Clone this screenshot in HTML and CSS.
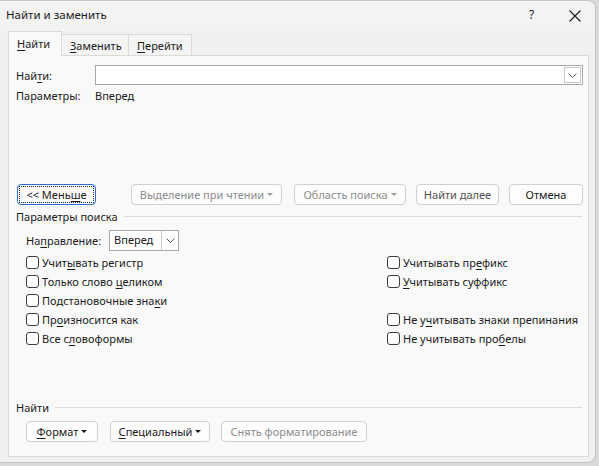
FILE: index.html
```html
<!DOCTYPE html>
<html lang="ru">
<head>
<meta charset="utf-8">
<link rel="stylesheet" href="styles.css">
</head>
<body>
<div class="dialog">
  <div class="titlebar">
    <span class="title">Найти и заменить</span>
    <span class="help">?</span>
    <svg class="close" width="12" height="12" viewBox="0 0 12 12"><path d="M0.5 0.5 L11.5 11.5 M11.5 0.5 L0.5 11.5" stroke="#1a1a1a" stroke-width="1.1" fill="none"/></svg>
  </div>
  <div class="tabs">
    <div class="tab active t1"><span><u>Н</u>айти</span></div>
    <div class="tab t2"><span><u>З</u>аменить</span></div>
    <div class="tab t3"><span><u>П</u>ерейти</span></div>
  </div>
  <div class="panel">
    <div class="row find-row">
      <span class="lbl">Най<u>т</u>и:</span>
      <div class="combo">
        <div class="combo-text"></div>
        <div class="combo-btn"><svg width="9" height="5" viewBox="0 0 9 5"><path d="M0.5 0.5 L4.5 4.5 L8.5 0.5" stroke="#555" stroke-width="1" fill="none"/></svg></div>
      </div>
    </div>
    <div class="row params-row">
      <span class="lbl">Параметры:</span>
      <span>Вперед</span>
    </div>
    <div class="btn-row">
      <button class="btn focus"><span class="dots"><span>&lt;&lt; Мень<u>ш</u>е</span></span></button>
      <button class="btn disabled w-sel"><span>Выделение при чтении</span><span class="caret"></span></button>
      <button class="btn disabled w-area"><span>Область поиска</span><span class="caret"></span></button>
      <button class="btn w-next"><span class="grey">Найти далее</span></button>
      <button class="btn w-cancel"><span>Отмена</span></button>
    </div>
    <div class="section"><span>Параметры поиска</span><div class="line"></div></div>
    <div class="dir-row">
      <span>На<u>п</u>равление:</span>
      <div class="select">
        <div class="select-text">Вперед</div>
        <div class="select-btn"><svg width="9" height="5" viewBox="0 0 9 5"><path d="M0.5 0.5 L4.5 4.5 L8.5 0.5" stroke="#555" stroke-width="1" fill="none"/></svg></div>
      </div>
    </div>
    <div class="checks">
      <label class="chk"><span class="box"></span><span>Учит<u>ы</u>вать регистр</span></label>
      <label class="chk"><span class="box"></span><span>Учитывать пр<u>е</u>фикс</span></label>
      <label class="chk"><span class="box"></span><span>Только слово <u>ц</u>еликом</span></label>
      <label class="chk"><span class="box"></span><span><u>У</u>читывать суффикс</span></label>
      <label class="chk"><span class="box"></span><span>Подстановочные зна<u>к</u>и</span></label>
      <span class="empty"></span>
      <label class="chk"><span class="box"></span><span>Пр<u>о</u>износится как</span></label>
      <label class="chk"><span class="box"></span><span>Не у<u>ч</u>итывать знаки препинания</span></label>
      <label class="chk"><span class="box"></span><span>Все с<u>л</u>овоформы</span></label>
      <label class="chk"><span class="box"></span><span>Не учитывать про<u>б</u>елы</span></label>
    </div>
    <div class="spacer"></div>
    <div class="section sec2"><span>Найти</span><div class="line"></div></div>
    <div class="bottom-row">
      <button class="btn w-fmt"><span><u>Ф</u>ормат</span><span class="caret dark"></span></button>
      <button class="btn w-spec"><span><u>С</u>пециальный</span><span class="caret dark"></span></button>
      <button class="btn disabled w-clear"><span>Снять форматирование</span></button>
    </div>
  </div>
</div>
</body>
</html>
```
FILE: styles.css
```css
* { box-sizing: border-box; }
html, body { margin: 0; padding: 0; }
body {
  width: 599px; height: 466px;
  background: #dadada;
  font-family: "Noto Sans", "Open Sans", sans-serif;
  font-size: 11px;
  color: #1a1a1a;
  overflow: hidden;
}
u { text-decoration: underline; text-underline-offset: 2px; text-decoration-thickness: 1px; }
.dialog {
  width: 596px; height: 463px;
  background: #f0f0f0;
  border: 1px solid #c4c4c4;
  border-left: none;
  border-radius: 0 8px 8px 0;
  display: flex; flex-direction: column;
}
.titlebar {
  height: 30px;
  display: flex; align-items: center;
  padding-left: 6px;
  padding-bottom: 3px;
  background: #f3f3f3;
  border-radius: 0 8px 0 0;
}
.title { flex: 1; font-size: 11.5px; color: #1a1a1a; }
.help { width: 20px; margin-right: 20px; font-size: 12px; }
.close { margin-right: 14px; margin-top: 2px; }
.tabs {
  display: flex; align-items: flex-end;
  padding-left: 8px;
  height: 24px;
}
.tab {
  height: 21px;
  padding: 0 0 0 8px;
  background: #f4f4f4;
  border: 1px solid #dadada;
  border-bottom: none;
  border-left: none;
  display: flex; align-items: center;
}
.t1 { width: 54px; }
.t2 { width: 67px; }
.t3 { width: 63px; }
.tab.active {
  height: 25px;
  background: #f9f9f9;
  border-left: 1px solid #dadada;
  margin-bottom: -1px;
  padding-bottom: 1px;
  position: relative;
  z-index: 1;
}
.panel {
  margin-left: 8px;
  width: 581px;
  height: 402px;
  background: #f9f9f9;
  border: 1px solid #dadada;
  display: flex; flex-direction: column;
  padding: 9px 5px 0 7px;
}
.row { display: flex; align-items: center; }
.lbl { width: 79px; }
.find-row { height: 20px; }
.combo {
  flex: 1; height: 20px;
  border: 1px solid #a8a8a8;
  background: #fff;
  display: flex;
}
.combo-text { flex: 1; }
.combo-btn, .select-btn {
  width: 17px; height: 18px;
  border-left: 1px solid #c8c8c8;
  display: flex; align-items: center; justify-content: center;
}
.combo-btn { margin-right: 1px; height: 16px; margin-top: 1px; border: 1px solid #c8c8c8; }
.params-row { margin-top: 1px; height: 18px; }
.btn-row {
  display: flex; align-items: center;
  margin-top: 80px;
  height: 21px;
}
.btn {
  font-family: inherit; font-size: 11px;
  height: 21px;
  background: #fdfdfd;
  border: 1px solid #d0d0d0;
  border-radius: 4px;
  color: #1a1a1a;
  padding: 0 0 1px 0;
  display: flex; align-items: center; justify-content: center;
}
.btn.focus {
  width: 79px; margin-left: 1px;
  border: 1px solid #2a6fd0;
  padding: 1px;
}
.dots {
  border: 1px dotted #222;
  width: 100%; height: 100%;
  display: flex; align-items: center; justify-content: center;
  padding-bottom: 1px;
}
.disabled { color: #8c8c8c; }
.grey { color: #505050; }
.w-sel { width: 151px; margin-left: 35px; }
.w-area { width: 112px; margin-left: 12px; }
.w-next { width: 83px; margin-left: 10px; }
.w-cancel { width: 74px; margin-left: 10px; }
.caret {
  display: inline-block;
  width: 0; height: 0;
  border-left: 3px solid transparent;
  border-right: 3px solid transparent;
  border-top: 3px solid #9a9a9a;
  margin-left: 3px;
  margin-top: 1px;
}
.caret.dark { border-top-color: #1a1a1a; }
.section {
  display: flex; align-items: center;
  margin-top: 2px;
  height: 18px;
}
.section .line { flex: 1; height: 1px; background: #dcdcdc; margin-left: 6px; margin-right: 1px; }
.dir-row {
  display: flex; align-items: center;
  margin-top: 5px;
  margin-left: 10px;
  height: 21px;
}
.select {
  margin-left: 8px;
  width: 70px; height: 21px;
  border: 1px solid #a8a8a8;
  background: #fff;
  display: flex;
}
.select-text { flex: 1; padding-left: 4px; line-height: 18px; }
.select-btn { height: 19px; }
.checks {
  display: grid;
  grid-template-columns: 361px auto;
  grid-auto-rows: 19px;
  margin-left: 10px;
  margin-top: 2px;
}
.chk { display: flex; align-items: center; white-space: nowrap; }
.box {
  width: 13px; height: 13px;
  border: 1px solid #3c3c3c;
  border-radius: 3px;
  background: #fff;
  margin-right: 3px;
}
.spacer { flex: 1; }
.sec2 { margin-bottom: 5px; margin-top: 0; }
.bottom-row {
  display: flex; align-items: center;
  margin-left: 10px;
  margin-bottom: 14px;
}
.w-fmt { width: 72px; }
.w-spec { width: 100px; margin-left: 12px; }
.w-clear { width: 146px; margin-left: 11px; }
```
